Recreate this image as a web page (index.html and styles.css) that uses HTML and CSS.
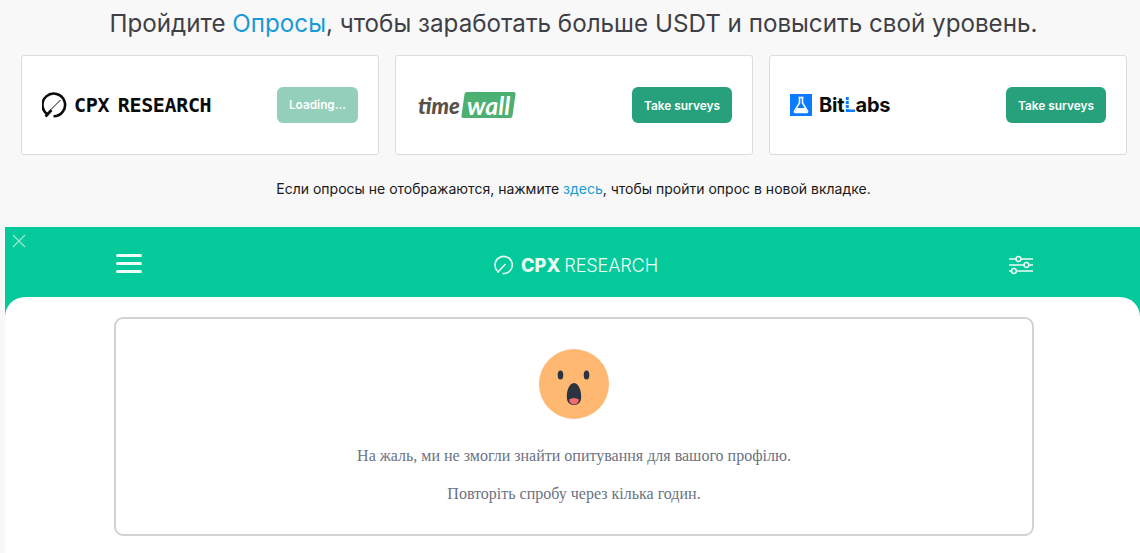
FILE: index.html
```html
<!DOCTYPE html>
<html lang="ru">
<head>
    <meta charset="UTF-8">
    <title>Опросы</title>
    <link rel="stylesheet" href="styles.css">
</head>
<body>
    <h1 class="title">Пройдите <a href="#">Опросы</a>, чтобы заработать больше USDT и повысить свой уровень.</h1>

    <div class="cards">
        <div class="card">
            <div class="logo-cpx">
                <svg width="26" height="26" viewBox="0 0 26 26" fill="none" stroke="#0b0b0b" stroke-width="2.6">
                    <path d="M6.500 22.900 A11.300 11.300 0 1 1 11.500 24.200"/>
                    <path d="M9 17.500 L18.500 8" stroke-width="1"/>
                    <path d="M3.500 24.500 L9.500 18" stroke-width="2.600"/>
                </svg>
                <span>CPX RESEARCH</span>
            </div>
            <button class="btn btn-loading">Loading...</button>
        </div>
        <div class="card">
            <div class="logo-timewall">
                <span class="tw-time">time</span><span class="tw-wall"><span>wall</span></span>
            </div>
            <button class="btn">Take surveys</button>
        </div>
        <div class="card">
            <div class="logo-bitlabs">
                <svg width="22" height="22" viewBox="0 0 22 22">
                    <rect width="22" height="22" fill="#0b7cff"/>
                    <path d="M8.500 3.500 H13.500 M9.500 3.500 V9 L4.500 17 Q4 18.500 5.500 18.500 H16.500 Q18 18.500 17.500 17 L12.500 9 V3.500" fill="none" stroke="#fff" stroke-width="1.500"/>
                    <path d="M7 14 H15 L17 18 H5 Z" fill="#fff"/>
                </svg>
                <span class="bl-text">Bit<span class="bl-l">L</span>abs</span>
            </div>
            <button class="btn">Take surveys</button>
        </div>
    </div>

    <p class="note">Если опросы не отображаются, нажмите <a href="#">здесь</a>, чтобы пройти опрос в новой вкладке.</p>

    <div class="frame">
        <svg class="close" width="14" height="14" viewBox="0 0 14 14" stroke="#9fe8d2" stroke-width="1.2">
            <path d="M1 1 L13 13 M13 1 L1 13"/>
        </svg>
        <header class="frame-head">
            <div class="burger"><i></i><i></i><i></i></div>
            <div class="frame-logo">
                <svg width="20" height="20" viewBox="0 0 20 20" fill="none" stroke="#e6faf4" stroke-width="1.6">
                    <path d="M5 17.200 A8.600 8.600 0 1 1 8.500 18.500"/>
                    <path d="M3.500 17.500 L11.500 9"/>
                </svg>
                <b>CPX</b><span>RESEARCH</span>
            </div>
            <svg class="filters" width="26" height="20" viewBox="0 0 26 20" fill="none" stroke="#eefcf8" stroke-width="1.500">
                <path d="M1 4 H8 M13 4 H25 M1 10 H16 M21 10 H25 M1 16 H3.500 M8.500 16 H25"/>
                <circle cx="10.500" cy="4" r="2.400"/>
                <circle cx="18.500" cy="10" r="2.400"/>
                <circle cx="6" cy="16" r="2.400"/>
            </svg>
        </header>
        <main class="frame-body">
            <div class="empty-box">
                <svg class="face" width="70" height="70" viewBox="0 0 70 70">
                    <circle cx="35" cy="35" r="35" fill="#feb872"/>
                    <ellipse cx="21.500" cy="26" rx="2.800" ry="4.500" fill="#2b3340"/>
                    <ellipse cx="47.500" cy="26" rx="2.800" ry="4.500" fill="#2b3340"/>
                    <path d="M35 34 C40 34 43 43 42 50 C41.500 54 38 56 35 56 C32 56 28.500 54 28 50 C27 43 30 34 35 34 Z" fill="#2b3340"/>
                    <path d="M30 50.500 Q35 47.500 40 50.500 C39.500 54 37.500 55.500 35 55.500 C32.500 55.500 30.500 54 30 50.500 Z" fill="#f56a70"/>
                </svg>
                <p class="empty-text first">На жаль, ми не змогли знайти опитування для вашого профілю.</p>
                <p class="empty-text">Повторіть спробу через кілька годин.</p>
            </div>
        </main>
    </div>
</body>
</html>
```

FILE: styles.css
```css
html, body { height: 553px; overflow: hidden; }
body { margin: 0; background-color: #f8f8f8; font-family: Inter, "Noto Sans", sans-serif; }
a { color: #189ad6; text-decoration: none; }

.title { margin: 0; padding: 9px 0 0 7px; height: 55px; box-sizing: border-box; text-align: center; font-size: 24.2px; line-height: 30px; font-weight: 400; color: #3f3f46; white-space: nowrap; }

.cards { display: flex; gap: 16px; padding: 0 13px 0 21px; }
.card {
    width: 358px; height: 100px; box-sizing: border-box; flex: none;
    display: flex; align-items: center; justify-content: space-between;
    padding: 0 20px; background: white; border: 1px solid #dcdcdc; border-radius: 3px;
}

.btn {
    height: 36px; width: 100px; padding: 0; border: none; border-radius: 6px;
    background-color: #26a17b; color: white; white-space: nowrap;
    font-family: Inter, sans-serif; font-size: 11.9px; font-weight: 600;
}
.btn-loading { width: 81px; background-color: #93cfba; font-size: 11.8px; }

.logo-cpx { display: flex; align-items: center; gap: 6px; }
.logo-cpx span { font-family: "DejaVu Sans Mono", monospace; font-weight: 700; font-size: 20px; letter-spacing: -0.35px; word-spacing: -3px; color: #0b0b0b; white-space: nowrap; }

.logo-timewall { display: flex; align-items: center; margin-left: 2px; }
.tw-time { font-family: Lato, sans-serif; font-style: italic; font-weight: 900; font-size: 22px; color: #5a5048; }
.tw-wall { margin-left: 3px; background: #4bb071; border-radius: 2px; transform: skewX(-8deg); padding: 0 4px; height: 26px; display: flex; align-items: center; }
.tw-wall span { font-family: Lato, sans-serif; font-style: italic; font-weight: 700; font-size: 25px; color: white; transform: skewX(8deg); line-height: 26px; }

.logo-bitlabs { display: flex; align-items: center; gap: 7px; }
.bl-text { font-family: Inter, sans-serif; font-weight: 700; font-size: 20px; color: #0c0c0c; letter-spacing: -0.2px; }
.bl-l { color: transparent; background: repeating-linear-gradient(to bottom, #0b7cff 0 3px, white 3px 4px); -webkit-background-clip: text; background-clip: text; }

.note { margin: 0; padding: 25px 0 0 7px; height: 72px; box-sizing: border-box; text-align: center; font-size: 14px; line-height: 18px; color: #18181b; }

.frame { position: relative; margin-left: 5px; background-color: #03c99b; }
.close { position: absolute; left: 7px; top: 7px; }
.frame-head { height: 70px; display: grid; grid-template-columns: 340px 1fr 333px; align-items: center; }
.burger { display: flex; flex-direction: column; gap: 5px; width: 26px; margin-left: 111px; margin-top: 2px; }
.burger i { display: block; height: 3px; background: #f0fdf9; border-radius: 2px; }
.frame-logo { display: flex; align-items: center; justify-content: center; gap: 4px; font-family: Inter, sans-serif; color: #eafbf6; font-size: 18.2px; margin-top: 6px; }
.frame-logo b { font-weight: 800; margin-left: 3px; }
.frame-logo span { font-weight: 300; font-family: Inter, sans-serif; letter-spacing: -0.2px; }
.filters { margin-left: 201px; margin-top: 6px; }

.frame-body { background: white; border-radius: 20px 20px 0 0; padding: 20px 106px 0 109px; height: 256px; box-sizing: border-box; }
.empty-box { height: 219px; box-sizing: border-box; border: 2px solid #d1d2d4; border-radius: 9px; text-align: center; padding-top: 30px; }
.face { display: block; margin: 0 auto; }
.empty-text { margin: 0; font-family: "Liberation Serif", serif; font-size: 16px; line-height: 20px; color: #6b7280; }
.empty-text.first { margin-top: 27px; margin-bottom: 18px; }
```
